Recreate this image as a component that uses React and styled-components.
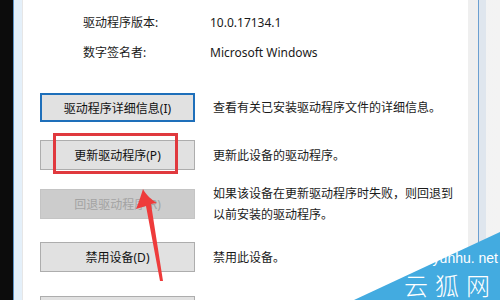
import styled, { createGlobalStyle } from "styled-components";

const Global = createGlobalStyle`
  html, body {
    margin: 0;
    padding: 0;
    background: #0c0c0c;
    overflow: hidden;
  }
  body {
    font-family: "Noto Sans", "Noto Sans CJK SC", sans-serif;
  }
`;

const info = [
  { label: "驱动程序版本:", value: "10.0.17134.1" },
  { label: "数字签名者:", value: "Microsoft Windows" },
];

const actions = [
  { text: "驱动程序详细信息(I)", desc: ["查看有关已安装驱动程序文件的详细信息。"], focused: true, after: 18 },
  { text: "更新驱动程序(P)", desc: ["更新此设备的驱动程序。"], after: 13 },
  { text: "回退驱动程序(R)", desc: ["如果该设备在更新驱动程序时失败，则回退到", "以前安装的驱动程序。"], disabled: true, after: 17 },
  { text: "禁用设备(D)", desc: ["禁用此设备。"], after: 24 },
  { text: "卸载设备(U)", desc: ["从系统中卸载设备(高级)。"], after: 0 },
];

const App = () => {
  return (
    <>
      <Global />
      <Screen>
        <Frame>
          <Content>
            <InfoList>
              {info.map((row) => (
                <InfoRow key={row.label}>
                  <Label>{row.label}</Label>
                  <Value>{row.value}</Value>
                </InfoRow>
              ))}
            </InfoList>

            <Actions>
              {actions.map((a) => (
                <ActionRow key={a.text} $after={a.after}>
                  <Button $focused={a.focused} disabled={a.disabled}>
                    {a.text}
                  </Button>
                  <Desc>
                    {a.desc.map((line) => (
                      <div key={line}>{line}</div>
                    ))}
                  </Desc>
                </ActionRow>
              ))}
            </Actions>
          </Content>
          <Track />
          <Edge />
          <Outer />
        </Frame>

        <Highlight />

        <Arrow width="40" height="100" viewBox="0 0 40 100">
          <path d="M13 0 C16 6 22 11 27 14 L21 15 L33 92 L30 92 L16 17 L6 20 C9 13 11 6 13 0 Z" fill="#ee3b3b" />
        </Arrow>

        <Watermark>
          <svg width="146" height="70" viewBox="0 0 146 70">
            <polygon points="0,70 146,2 146,70" fill="#43abe0" />
          </svg>
          <Domain>yunhu. net</Domain>
          <Brand>云狐网</Brand>
        </Watermark>
      </Screen>
    </>
  );
};

const Screen = styled.div`
  position: relative;
  width: 500px;
  height: 300px;
  overflow: hidden;
  background: #0c0c0c;
`;

const Frame = styled.div`
  display: flex;
  margin-left: 13px;
  height: 300px;
  border-left: 1px solid #5d94c8;
  padding-left: 8px;
  background: linear-gradient(to right, #e4f0fa, #f3f3f3);
`;

const Content = styled.div`
  width: 446px;
  background: #ffffff;
  border-left: 1px solid #e6e6e6;
  box-sizing: border-box;
  overflow: hidden;
`;

const Track = styled.div`
  width: 10px;
  background: #efefef;
`;

const Edge = styled.div`
  width: 1px;
  background: #6c9fd0;
`;

const Outer = styled.div`
  width: 7px;
  background: #dfe6ee;
`;

const InfoList = styled.div`
  padding: 7px 0 0 60px;
`;

const InfoRow = styled.div`
  display: flex;
  height: 30px;
  align-items: center;
  font-size: 12px;
  color: #1a1a1a;
`;

const Label = styled.div`
  width: 127px;
`;

const Value = styled.div``;

const Actions = styled.div`
  padding: 26px 0 0 17px;
`;

const ActionRow = styled.div`
  display: flex;
  align-items: center;
  gap: 18px;
  margin-bottom: ${(p) => p.$after}px;
`;

const Button = styled.button`
  width: 155px;
  height: ${(p) => (p.$focused ? 29 : 30)}px;
  flex-shrink: 0;
  box-sizing: border-box;
  background: ${(p) => (p.disabled ? "#cccccc" : "#e1e1e1")};
  border: ${(p) => (p.$focused ? "2px solid #1e6fba" : p.disabled ? "1px solid #c4c4c4" : "1px solid #adadad")};
  color: ${(p) => (p.disabled ? "#a3a3a3" : "#111111")};
  font-family: "Noto Sans", "Noto Sans CJK SC", sans-serif;
  font-size: 12px;
  padding: 0;
`;

const Desc = styled.div`
  font-size: 12px;
  line-height: 21px;
  color: #1a1a1a;
  white-space: nowrap;
`;

const Highlight = styled.div`
  position: absolute;
  left: 53px;
  top: 133px;
  width: 125px;
  height: 41px;
  box-sizing: border-box;
  border: 3px solid #e0393e;
`;

const Arrow = styled.svg`
  position: absolute;
  left: 130px;
  top: 189px;
`;

const Watermark = styled.div`
  position: absolute;
  right: 0;
  bottom: 0;
  width: 146px;
  height: 70px;

  svg {
    display: block;
  }
`;

const Domain = styled.div`
  position: absolute;
  right: 2px;
  top: 20px;
  color: #ffffff;
  font-family: "Liberation Sans", sans-serif;
  font-size: 14px;
  line-height: 16px;
  white-space: nowrap;
`;

const Brand = styled.div`
  position: absolute;
  right: 3px;
  top: 42px;
  color: #ffffff;
  font-family: "Noto Sans CJK SC", sans-serif;
  font-weight: 300;
  font-size: 24px;
  line-height: 26px;
  letter-spacing: 7px;
  white-space: nowrap;
`;

export default App;
